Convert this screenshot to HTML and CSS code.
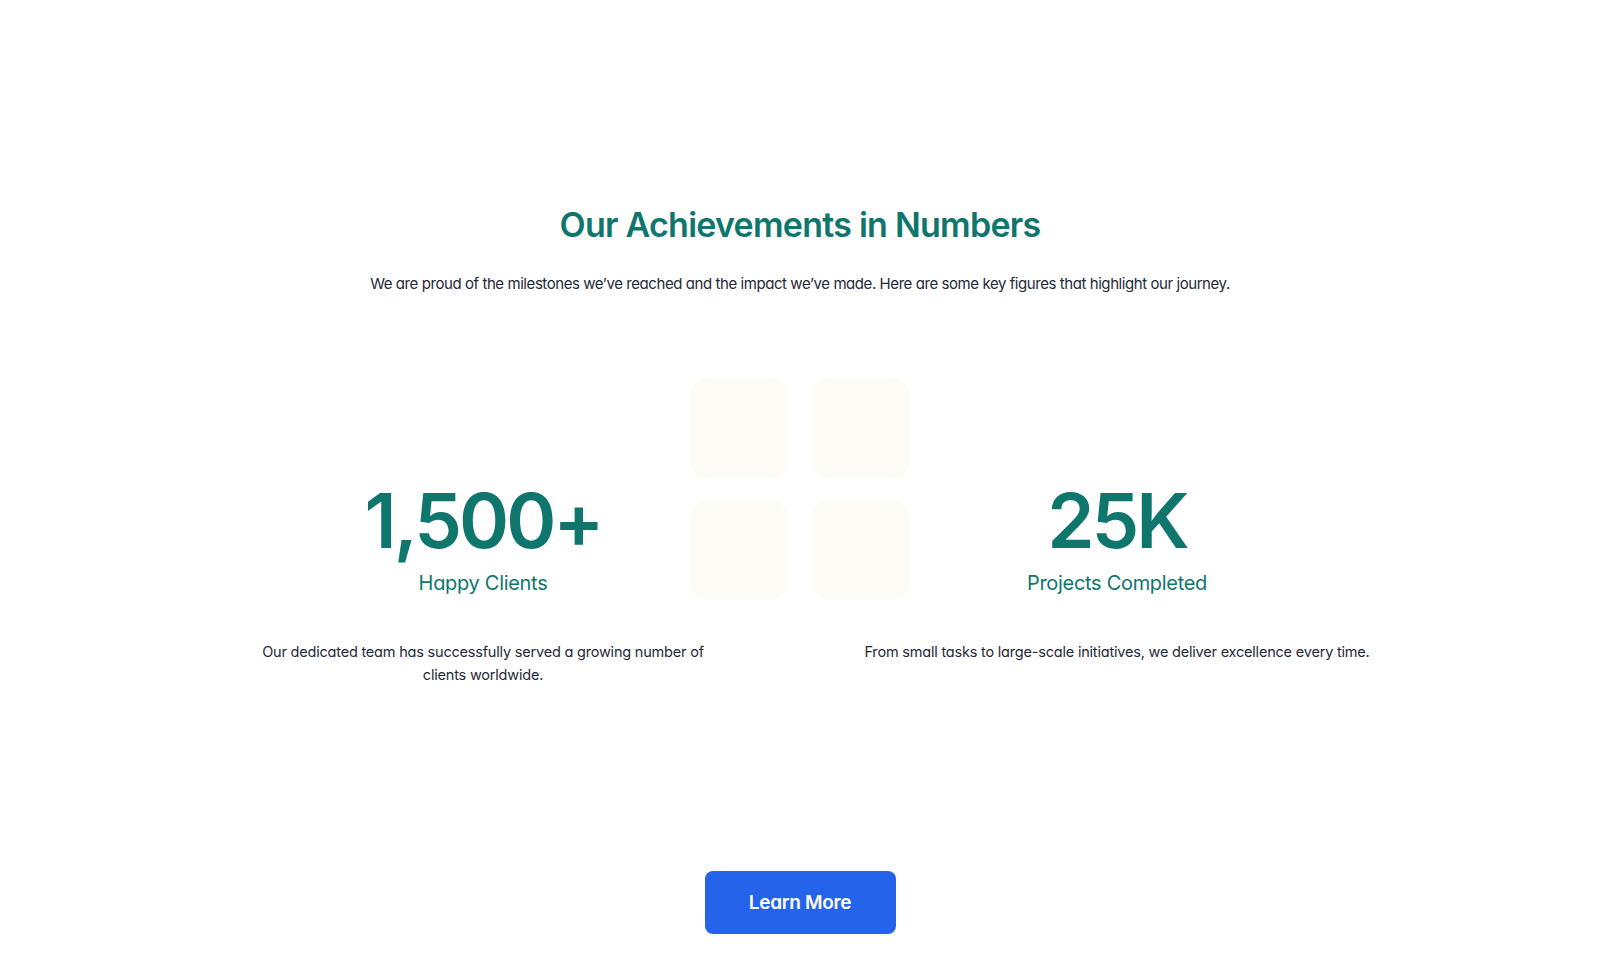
FILE: index.html
```html
<!DOCTYPE html>
<html lang="en">
<head>
<meta charset="utf-8">
<title>Our Achievements in Numbers</title>
<link rel="stylesheet" href="styles.css">
</head>
<body>
<section class="achievements">
  <h1 class="title">Our Achievements in Numbers</h1>
  <p class="subtitle">We are proud of the milestones we’ve reached and the impact we’ve made. Here are some key figures that highlight our journey.</p>
  <div class="stats">
    <div class="stat">
      <div class="stat-number">1,500+</div>
      <div class="stat-label">Happy Clients</div>
      <p class="stat-desc stat-desc-left">Our dedicated team has successfully served a growing number of clients worldwide.</p>
    </div>
    <div class="tiles" aria-hidden="true">
      <span class="tile"></span>
      <span class="tile"></span>
      <span class="tile"></span>
      <span class="tile"></span>
    </div>
    <div class="stat">
      <div class="stat-number">25K</div>
      <div class="stat-label">Projects Completed</div>
      <p class="stat-desc stat-desc-right">From small tasks to large-scale initiatives, we deliver excellence every time.</p>
    </div>
  </div>
  <div class="actions">
    <a class="btn" href="#">Learn More</a>
  </div>
</section>
</body>
</html>
```

FILE: styles.css
```css
* { box-sizing: border-box; }

html, body {
  margin: 0;
  padding: 0;
  background: #ffffff;
}

body {
  font-family: Inter, "Noto Sans", "Liberation Sans", sans-serif;
  font-feature-settings: "cv11", "ss01";
  color: #1f2937;
}

.achievements {
  display: flex;
  flex-direction: column;
  align-items: center;
  padding-top: 203px;
}

.title {
  margin: 0;
  font-size: 34px;
  line-height: 43px;
  font-weight: 600;
  color: #0f766e;
  letter-spacing: -0.75px;
}

.subtitle {
  margin: 26px 0 0;
  font-size: 15px;
  line-height: 24px;
  letter-spacing: -0.43px;
  color: #1f2937;
}

.stats {
  margin-top: 82px;
  display: grid;
  grid-template-columns: 412px 222px 412px;
  align-items: start;
}

.stat {
  display: flex;
  flex-direction: column;
  align-items: center;
  text-align: center;
  padding-top: 104px;
}

.stat-number {
  font-size: 76px;
  line-height: 76px;
  font-weight: 600;
  color: #0f766e;
  letter-spacing: -3px;
}

.stat-label {
  margin-top: 11px;
  font-size: 20px;
  line-height: 29px;
  color: #0f766e;
  letter-spacing: -0.3px;
}

.stat-desc {
  margin: 43px 0 0;
  font-size: 14.5px;
  line-height: 22.5px;
  letter-spacing: -0.2px;
  color: #1f2937;
  flex-shrink: 0;
}

.stat-desc-left { width: 470px; }
.stat-desc-right { width: 540px; }

.tiles {
  display: grid;
  grid-template-columns: 100px 100px;
  grid-template-rows: 100px 100px;
  gap: 22px;
}

.tile {
  display: block;
  background: #fcfbf6;
  border-radius: 20px;
}

.actions {
  margin-top: 185px;
}

.btn {
  display: flex;
  align-items: center;
  justify-content: center;
  width: 191px;
  height: 63px;
  background: #2563eb;
  color: #ffffff;
  border-radius: 8px;
  font-size: 19px;
  font-weight: 600;
  text-decoration: none;
  letter-spacing: -0.3px;
}
```
